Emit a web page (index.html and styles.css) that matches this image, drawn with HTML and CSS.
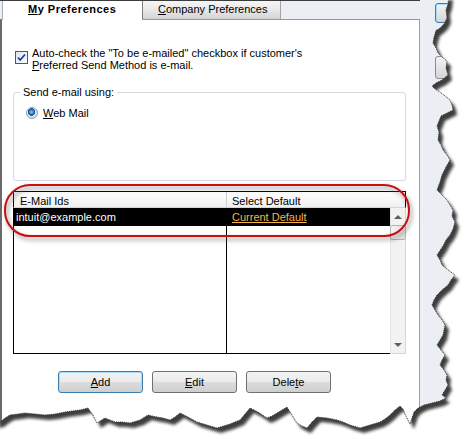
FILE: index.html
```html
<!DOCTYPE html>
<html lang="en">
<head>
    <meta charset="UTF-8">
    <title>Send Forms Preferences</title>
    <link rel="stylesheet" href="styles.css">
</head>
<body>
    <div class="screen">
        <div class="dialog">
            <div class="tabs">
                <div class="tab active"><u>M</u>y Preferences</div>
                <div class="tab other"><u>C</u>ompany Preferences</div>
            </div>
            <div class="panel">
                <div class="check-row">
                    <span class="checkbox">
                        <svg width="13" height="13" viewBox="0 0 13 13">
                            <path d="M3 6.5 L5.2 9 L10 3.5" fill="none" stroke="#1b3f94" stroke-width="1.8"/>
                        </svg>
                    </span>
                    <span>Auto-check the "To be e-mailed" checkbox if customer's<br><u>P</u>referred Send Method is e-mail.</span>
                </div>
                <fieldset class="group">
                    <legend>Send e-mail using:</legend>
                    <div class="radio-row"><span class="radio"></span><span><u>W</u>eb Mail</span></div>
                </fieldset>
                <div class="grid">
                    <div class="grid-head">
                        <div class="c1">E-Mail Ids</div>
                        <div class="c2">Select Default</div>
                    </div>
                    <div class="grid-body">
                        <div class="rows">
                            <div class="row selected">
                                <div class="c1">intuit@example.com</div>
                                <div class="c2"><span class="link">Current Default</span></div>
                            </div>
                            <div class="filler">
                                <div class="c1"></div>
                                <div class="c2"></div>
                            </div>
                        </div>
                        <div class="scrollbar">
                            <div class="arrow"><span class="tri up"></span></div>
                            <div class="thumb"></div>
                            <div class="track"></div>
                            <div class="arrow"><span class="tri down"></span></div>
                        </div>
                    </div>
                </div>
                <div class="buttons">
                    <button class="btn focused"><u>A</u>dd</button>
                    <button class="btn"><u>E</u>dit</button>
                    <button class="btn">Dele<u>t</u>e</button>
                </div>
            </div>
        </div>
        <div class="side">
            <div class="side-btn focused"></div>
            <div class="side-btn"></div>
            <div class="side-btn tall"></div>
        </div>

        <!-- red callout round the list header -->
        <svg class="overlay" width="465" height="439">
            <defs>
                <filter id="soft"><feGaussianBlur stdDeviation="2"/></filter>
            </defs>
            <rect x="7" y="188" width="404" height="51" rx="25" ry="25" fill="none" stroke="#666" stroke-width="3" opacity="0.5" filter="url(#soft)"/>
            <rect x="5" y="185" width="404" height="51" rx="25" ry="25" fill="none" stroke="#c80f0f" stroke-width="2"/>
        </svg>

        <!-- torn paper edge -->
        <svg class="overlay" width="465" height="439">
            <defs>
                <path id="paper" d="M-5 -5 L449 -5 L448 4 L446 10 L447 18 L444 24 L440 28 L436 31 L434 37 L433 43 L436 48 L438 53 L442 57 L447 61 L446 68 L448 75 L442 80 L436 83 L432 86 L435 89 L440 92 L445 96 L450 100 L452 105 L453 110 L447 113 L441 116 L439 121 L437 126 L439 132 L438 140 L441 145 L443 150 L447 155 L450 160 L446 167 L442 175 L440 182 L437 190 L442 195 L447 200 L450 205 L453 210 L452 216 L455 222 L453 229 L450 235 L446 240 L443 246 L437 255 L440 260 L442 265 L448 270 L455 275 L451 280 L448 285 L442 290 L437 295 L434 300 L432 305 L435 310 L438 315 L442 320 L445 325 L443 335 L440 340 L437 345 L441 350 L445 355 L442 360 L440 365 L444 370 L447 375 L446 380 L448 385 L445 390 L442 395 L446 398 L440 401 L432 403 L424 405 L418 408 L414 412 L412 418 L410 424 L406 416 L403 409 L400 406 L395 410 L390 415 L385 419 L380 422 L370 425 L360 428 L350 425 L343 422 L337 420 L327 418 L317 417 L312 422 L307 428 L302 426 L297 423 L292 415 L287 407 L282 410 L277 413 L272 416 L267 418 L258 412 L250 408 L245 414 L240 420 L230 424 L217 428 L207 425 L197 422 L188 417 L180 413 L175 417 L170 420 L163 418 L157 417 L152 416 L148 415 L140 420 L130 423 L122 422 L115 422 L110 420 L105 418 L100 421 L97 423 L93 415 L88 408 L80 410 L72 411 L65 412 L55 414 L45 415 L35 414 L25 413 L18 414 L10 415 L5 418 L0 422 L-5 423 Z"/>
                <mask id="outside">
                    <rect x="0" y="0" width="465" height="439" fill="#fff"/>
                    <use href="#paper" fill="#000"/>
                </mask>
                <filter id="blur" x="-10%" y="-10%" width="120%" height="120%"><feGaussianBlur stdDeviation="1.8"/></filter>
            </defs>
            <g mask="url(#outside)">
                <rect x="0" y="0" width="465" height="439" fill="#fff"/>
                <use href="#paper" fill="#1e1e1e" opacity="0.85" transform="translate(4 5)" filter="url(#blur)"/>
            </g>
            <use href="#paper" fill="none" stroke="#3a3a3a" stroke-width="1" stroke-dasharray="1 1"/>
        </svg>
    </div>
</body>
</html>
```

FILE: styles.css
```css
body {
    margin: 0;
    font-family: "Liberation Sans", Arial, sans-serif;
    font-size: 11px;
    color: #000;
    background-color: #fff;
}
.screen {
    position: relative;
    display: flex;
    width: 465px;
    height: 439px;
    overflow: hidden;
    background-color: #ebeef3;
}
.dialog {
    display: flex;
    flex-direction: column;
    width: 420px;
    border-top: 1px solid #3c3c3c;
}
.tabs {
    position: relative;
    z-index: 1;
    display: flex;
    height: 18px;
    padding-left: 2px;
}
.tab {
    box-sizing: border-box;
    height: 18px;
    line-height: 16px;
    white-space: nowrap;
}
.tab.active {
    width: 140px;
    height: 19px;
    padding-left: 25px;
    background-color: #fff;
    border-left: 1px solid #a9b0b9;
    font-weight: bold;
    letter-spacing: 0.5px;
}
.tab.other {
    width: 139px;
    padding-left: 15px;
    background: linear-gradient(#f6f6f6, #e6e6e6 55%, #d3d3d3);
    border-left: 1px solid #7a7a7a;
    border-right: 1px solid #a4a4a4;
}
.panel {
    flex: 1;
    padding: 27px 13px 0 11px;
    background-color: #fff;
    border-top: 1px solid #919b9c;
    border-left: 2px solid #6a6a6a;
    border-right: 1px solid #9ba2aa;
}
.check-row {
    display: flex;
    gap: 4px;
    padding-left: 2px;
    line-height: 12px;
}
.checkbox {
    flex: none;
    box-sizing: border-box;
    width: 13px;
    height: 13px;
    margin-top: 4px;
    border: 1px solid #2c5f9a;
    background: linear-gradient(135deg, #dfe6f0, #fbfcfd);
}
.checkbox svg {
    display: block;
    margin: -1px 0 0 -1px;
}
.group {
    box-sizing: border-box;
    height: 95px;
    min-width: 0;
    margin: 15px 0 0;
    padding: 0;
    border: 1px solid #d3d9df;
    border-radius: 3px;
}
.group legend {
    margin-left: 6px;
    padding: 0 3px;
    line-height: 13px;
}
.radio-row {
    display: flex;
    align-items: center;
    gap: 5px;
    margin: 8px 0 0 12px;
    line-height: 12px;
}
.radio {
    box-sizing: border-box;
    width: 12px;
    height: 12px;
    border: 1px solid #9a9fa6;
    border-radius: 50%;
    background: radial-gradient(circle at 45% 40%, #8fd0ff 0, #1a73c9 2.5px, #154f95 3.6px, #eef1f4 4px, #d7dbe0 5px);
}
.grid {
    margin-top: 10px;
}
.grid-head {
    display: flex;
    box-sizing: border-box;
    height: 17px;
    line-height: 12px;
    background: linear-gradient(#fff, #f0f0f0);
    border: 1px solid #000;
    border-bottom: 1px solid #d6d6d6;
}
.grid-head .c1 {
    box-sizing: border-box;
    width: 213px;
    padding: 3px 0 0 6px;
    border-right: 1px solid #cfcfcf;
}
.grid-head .c2 {
    padding: 3px 0 0 5px;
}
.grid-body {
    display: flex;
    height: 146px;
}
.rows {
    display: flex;
    flex-direction: column;
    box-sizing: border-box;
    width: 377px;
    border-left: 1px solid #000;
    border-bottom: 1px solid #000;
}
.row {
    display: flex;
    height: 18px;
    line-height: 18px;
}
.row .c1, .filler .c1 {
    box-sizing: border-box;
    width: 213px;
    padding-left: 2px;
    border-right: 1px solid #000;
}
.row .c2 {
    padding-left: 5px;
}
.selected {
    background-color: #000;
    color: #fff;
}
.link {
    color: #f4b446;
    text-decoration: underline;
}
.filler {
    display: flex;
    flex: 1;
}
.scrollbar {
    display: flex;
    flex-direction: column;
    box-sizing: border-box;
    width: 16px;
    background-color: #f2f2f2;
    border-left: 1px solid #e4e4e4;
    border-right: 1px solid #d6d6d6;
    border-bottom: 1px solid #d6d6d6;
}
.arrow {
    display: flex;
    align-items: center;
    justify-content: center;
    height: 17px;
}
.tri {
    width: 0;
    height: 0;
    border-left: 4px solid transparent;
    border-right: 4px solid transparent;
}
.tri.up {
    border-bottom: 4px solid #5f5f5f;
}
.tri.down {
    border-top: 4px solid #5f5f5f;
}
.thumb {
    height: 13px;
    margin: 0 -1px 0 -1px;
    border: 1px solid #b4b4b4;
    border-radius: 2px;
    background: linear-gradient(90deg, #f4f4f4, #e2e2e2);
}
.track {
    flex: 1;
}
.buttons {
    display: flex;
    gap: 9px;
    margin: 17px 0 0 45px;
}
.btn {
    box-sizing: border-box;
    width: 85px;
    height: 22px;
    padding: 0;
    font-family: inherit;
    font-size: 11px;
    line-height: 20px;
    color: #000;
    border: 1px solid #707070;
    border-radius: 3px;
    background: linear-gradient(#f3f3f3, #ebebeb 48%, #dcdcdc 52%, #cfcfcf);
}
.btn.focused {
    border-color: #3c7fb1;
    box-shadow: inset 0 0 0 1px #a7dcf6;
}
.side {
    display: flex;
    flex-direction: column;
    gap: 6px;
    padding: 3px 0 0 15px;
}
.side-btn {
    box-sizing: border-box;
    width: 30px;
    height: 17px;
    border: 1px solid #8a8a8a;
    border-radius: 3px;
    background: linear-gradient(#f3f3f3, #d6d6d6);
}
.side-btn.focused {
    height: 20px;
    border-color: #3c7fb1;
    box-shadow: inset 0 0 0 1px #a7dcf6;
}
.side-btn.tall {
    height: 23px;
    margin-top: 4px;
}
.overlay {
    position: absolute;
    left: 0;
    top: 0;
    pointer-events: none;
}
```
